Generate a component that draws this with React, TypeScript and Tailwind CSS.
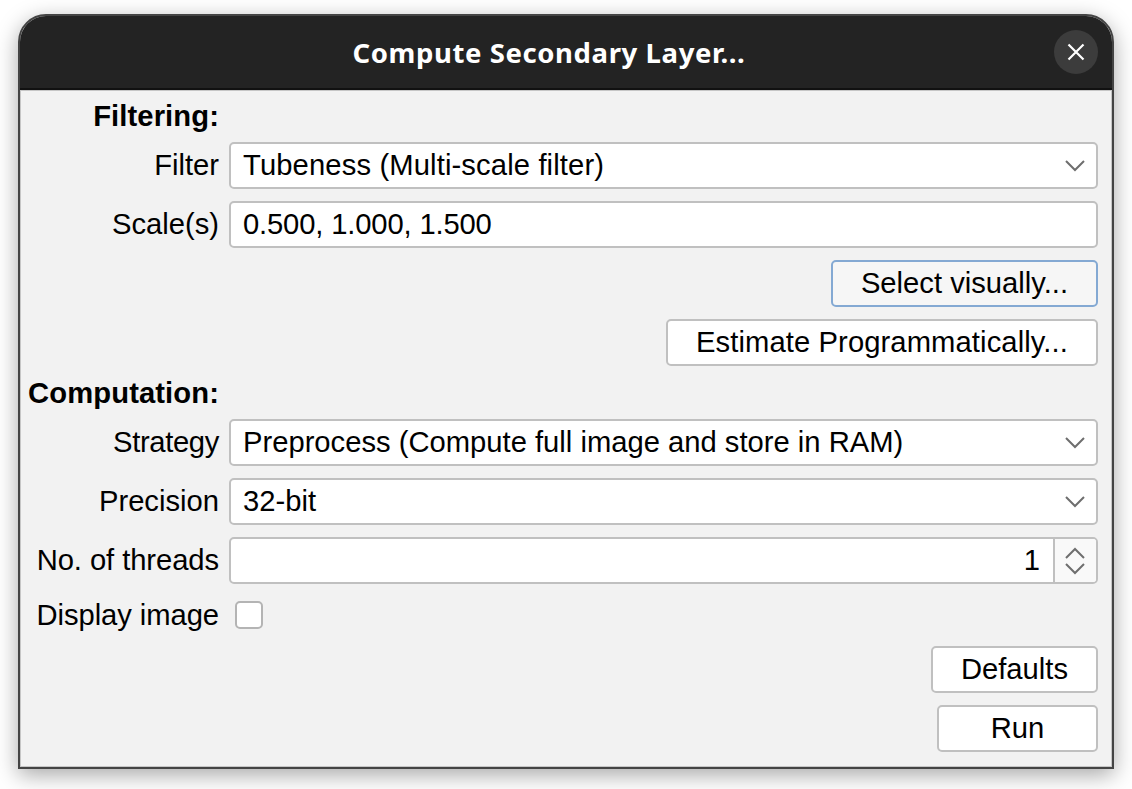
const fieldBase =
  'h-[47px] rounded-[5px] border-2 border-[#c0c0c0] bg-white flex items-center'

function Label({ children, bold, className }: { children: string; bold?: boolean; className?: string }) {
  return (
    <div
      className={`text-right whitespace-nowrap ${bold ? 'font-bold pt-[2px] leading-[27px] tracking-[0.1px]' : ''} ${className ?? ''}`}
    >
      {children}
    </div>
  )
}

function Chevron({ up }: { up?: boolean }) {
  return (
    <svg width="20" height="12" viewBox="0 0 20 12" fill="none" stroke="#6e6e6e" strokeWidth="2">
      <path d={up ? 'M1 11 L10 2 L19 11' : 'M1 1 L10 10 L19 1'} />
    </svg>
  )
}

function Combo({ value, className }: { value: string; className?: string }) {
  return (
    <div className={`${fieldBase} pl-[12px] pr-[11px] justify-between`}>
      <span className={className}>{value}</span>
      <Chevron />
    </div>
  )
}

function PushButton({ children, className }: { children: string; className?: string }) {
  return (
    <div className="col-start-2 flex justify-end">
      <button
        className={`h-[47px] rounded-[5px] border-2 px-[28px] ${className ?? 'border-[#c0c0c0] bg-white'}`}
      >
        {children}
      </button>
    </div>
  )
}

export default function App() {
  return (
    <div className="w-[1132px] h-[789px] bg-white pt-[14px] pl-[18px] font-['Liberation_Sans',sans-serif] text-[29.2px] text-black overflow-hidden">
      <div className="w-[1096px] h-[755px] flex flex-col rounded-t-[28px] border-2 border-[#444444] bg-[#f2f2f2] shadow-[0_6px_22px_rgba(0,0,0,0.35)] overflow-hidden">
        {/* Title bar */}
        <div className="relative h-[74px] shrink-0 flex items-center justify-center pr-[34px] bg-[#232323] border-b-2 border-[#111111]">
          <span className="font-['Noto_Sans',sans-serif] font-bold text-[27.5px] text-white tracking-[0.6px] translate-y-[1px]">
            Compute Secondary Layer...
          </span>
          <div className="absolute right-[14px] top-[14px] w-[44px] h-[44px] rounded-full bg-[#3c3c3c] flex items-center justify-center">
            <svg width="18" height="18" viewBox="0 0 18 18" fill="none" stroke="#ffffff" strokeWidth="2.2">
              <path d="M1.5 1.5 L16.5 16.5 M16.5 1.5 L1.5 16.5" />
            </svg>
          </div>
        </div>

        {/* Form */}
        <div className="flex-1 border border-[#c6c6c6]">
          <div className="grid grid-cols-[191px_869px] gap-x-[10px] gap-y-[12px] items-center pt-[10px] pl-[7px] leading-[29px]">
            <Label bold>Filtering:</Label>
            <div />

            <Label>Filter</Label>
            <Combo value="Tubeness (Multi-scale filter)" className="tracking-[0.13px]" />

            <Label>Scale(s)</Label>
            <div className={`${fieldBase} pl-[12px] tracking-[-0.15px]`}>0.500, 1.000, 1.500</div>

            <PushButton className="border-[#84a9d3] bg-[#f6f6f6]">Select visually...</PushButton>
            <PushButton className="border-[#c0c0c0] bg-white tracking-[0.1px]">Estimate Programmatically...</PushButton>

            <Label bold>Computation:</Label>
            <div />

            <Label className="tracking-[-0.35px]">Strategy</Label>
            <Combo value="Preprocess (Compute full image and store in RAM)" />

            <Label>Precision</Label>
            <Combo value="32-bit" />

            <Label className="tracking-[-0.07px]">No. of threads</Label>
            <div className={`${fieldBase} overflow-hidden`}>
              <span className="flex-1 text-right pr-[13px]">1</span>
              <div className="w-[43px] h-full shrink-0 border-l-2 border-[#c0c0c0] bg-[#f9f9f9] flex flex-col items-center justify-center gap-[4px] pr-[2px]">
                <Chevron up />
                <Chevron />
              </div>
            </div>

            <div className="h-[38px] flex items-center justify-end">
              <Label className="tracking-[-0.07px]">Display image</Label>
            </div>
            <div className="pl-[6px]">
              <div className="w-[28px] h-[28px] rounded-[5px] border-2 border-[#b4b4b4] bg-white" />
            </div>

            <PushButton>Defaults</PushButton>
            <PushButton className="border-[#c0c0c0] bg-white w-[161px] !px-0">Run</PushButton>
          </div>
        </div>
      </div>
    </div>
  )
}
